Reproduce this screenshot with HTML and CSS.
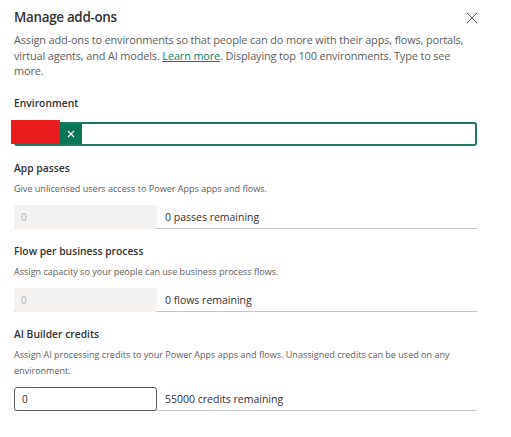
FILE: index.html
```html
<!DOCTYPE html>
<html lang="en">
<head>
<meta charset="utf-8">
<title>Manage add-ons</title>
<link rel="stylesheet" href="styles.css">
</head>
<body>
<div class="panel">
  <header class="head">
    <h1 class="title">Manage add-ons</h1>
    <button class="close" aria-label="Close">
      <svg width="12" height="12" viewBox="0 0 12 12"><path d="M1 1 L11 11 M11 1 L1 11" stroke="#605e5c" stroke-width="1" fill="none"/></svg>
    </button>
  </header>
  <p class="intro">Assign add-ons to environments so that people can do more with their apps, flows, portals,<br>virtual agents, and AI models. <a href="#" class="link">Learn more</a>. Displaying top 100 environments. Type to see<br>more.</p>

  <section class="field env">
    <div class="label">Environment</div>
    <div class="picker">
      <span class="tag"><span class="tag-name"></span><span class="tag-x"><svg width="8" height="8" viewBox="0 0 8 8"><path d="M1 1 L7 7 M7 1 L1 7" stroke="#fff" stroke-width="1.1" fill="none"/></svg></span></span>
      <span class="redact"></span>
    </div>
  </section>

  <section class="field">
    <div class="label">App passes</div>
    <div class="hint">Give unlicensed users access to Power Apps apps and flows.</div>
    <div class="row">
      <div class="num disabled">0</div>
      <div class="remain">0 passes remaining</div>
    </div>
  </section>

  <section class="field">
    <div class="label">Flow per business process</div>
    <div class="hint">Assign capacity so your people can use business process flows.</div>
    <div class="row">
      <div class="num disabled">0</div>
      <div class="remain">0 flows remaining</div>
    </div>
  </section>

  <section class="field">
    <div class="label">AI Builder credits</div>
    <div class="hint">Assign AI processing credits to your Power Apps apps and flows. Unassigned credits can be used on any environment.</div>
    <div class="row">
      <div class="num active">0</div>
      <div class="remain">55000 credits remaining</div>
    </div>
  </section>
</div>
</body>
</html>
```
FILE: styles.css
```css
* { box-sizing: border-box; }
html, body { margin: 0; background: #fff; }
body {
  font-family: "Open Sans", "Noto Sans", sans-serif;
  color: #323130;
}
.panel {
  width: 511px;
  padding: 4px 34px 0 14px;
}
.head {
  display: flex;
  justify-content: space-between;
  align-items: center;
  height: 26px;
}
.title {
  margin: 0;
  font-size: 13.4px;
  font-weight: 600;
  letter-spacing: -0.3px;
  line-height: 26px;
  color: #323130;
}
.close {
  border: 0;
  background: none;
  padding: 0;
  margin-right: -1px;
  margin-top: 1px;
  width: 12px;
  height: 12px;
  display: flex;
}
.intro {
  margin: 2px 0 0;
  white-space: nowrap;
  font-size: 10.95px;
  letter-spacing: -0.15px;
  line-height: 15.7px;
  color: #605e5c;
}
.link {
  color: #0f7d68;
  text-decoration: underline;
}
.field { margin-top: 14px; }
.env { margin-top: 16px; }
.label {
  font-size: 10.3px;
  font-weight: 600;
  line-height: 16px;
  color: #323130;
}
.picker {
  position: relative;
  margin-top: 11px;
  height: 24px;
  border: 2px solid #1d7a66;
  border-radius: 3px;
  display: flex;
  align-items: flex-start;
}
.tag {
  display: flex;
  height: 20px;
}
.tag-name {
  width: 44px;
  background: #e8e8e8;
}
.tag-x {
  width: 22px;
  background: #0b7656;
  display: flex;
  align-items: center;
  justify-content: center;
}
.redact {
  position: absolute;
  left: -5px;
  top: -4px;
  width: 49px;
  height: 24px;
  background: #e81c1c;
}
.hint {
  margin-top: 5px;
  font-size: 9.05px;
  line-height: 16px;
  color: #605e5c;
}
.row {
  margin-top: 8px;
  display: flex;
  align-items: center;
  gap: 8px;
  border-bottom: 1px solid #c8c6c4;
  height: 24px;
}
.num {
  flex: none;
  width: 143px;
  height: 24px;
  padding-left: 7px;
  font-size: 10px;
  display: flex;
  align-items: center;
  border-radius: 2px;
  margin-bottom: -1px;
}
.disabled {
  background: #f3f2f1;
  color: #b3b0ad;
}
.active {
  border: 1px solid #605e5c;
  border-radius: 3px;
  color: #323130;
}
.remain {
  font-size: 10.5px;
  color: #323130;
}
```
